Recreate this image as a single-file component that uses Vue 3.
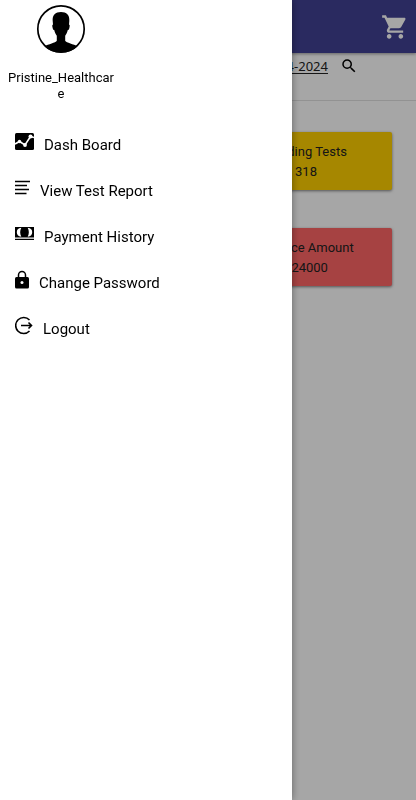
<script setup>
const menu = [
  { id: 'dash', label: 'Dash Board', icon: 'chart' },
  { id: 'report', label: 'View Test Report', icon: 'lines' },
  { id: 'payment', label: 'Payment History', icon: 'cash' },
  { id: 'password', label: 'Change Password', icon: 'lock' },
  { id: 'logout', label: 'Logout', icon: 'exit' }
]
const cards = [
  { title: 'Pending Tests', value: '318', tone: 'gold' },
  { title: 'Balance Amount', value: '724000', tone: 'red' }
]
</script>

<template>
  <div class="page">
    <header class="topbar">
      <button class="icon-btn" type="button" aria-label="Cart">
        <svg width="28" height="28" viewBox="0 0 24 24" fill="#fff">
          <path d="M7 18c-1.1 0-1.99.9-1.99 2S5.9 22 7 22s2-.9 2-2-.9-2-2-2zM1 2v2h2l3.6 7.59-1.35 2.45c-.16.28-.25.61-.25.96 0 1.1.9 2 2 2h12v-2H7.42c-.14 0-.25-.11-.25-.25l.03-.12.9-1.63h7.45c.75 0 1.41-.41 1.75-1.03l3.58-6.49c.08-.14.12-.31.12-.48 0-.55-.45-1-1-1H5.21l-.94-2H1zm16 16c-1.1 0-1.99.9-1.99 2s.89 2 1.99 2 2-.9 2-2-.9-2-2-2z" />
        </svg>
      </button>
    </header>
    <div class="filter">
      <a class="date" href="#date">01-04-2024</a>
      <button class="icon-btn" type="button" aria-label="Search">
        <svg width="18" height="18" viewBox="0 0 24 24">
          <path d="M15.5 14h-.79l-.28-.27A6.471 6.471 0 0 0 16 9.5 6.5 6.5 0 1 0 9.5 16c1.61 0 3.09-.59 4.23-1.57l.27.28v.79l5 4.99L20.49 19l-4.99-5zm-6 0C7.01 14 5 11.99 5 9.5S7.01 5 9.5 5 14 7.01 14 9.5 11.99 14 9.5 14z" />
        </svg>
      </button>
    </div>
    <main class="cards">
      <section v-for="c in cards" :key="c.title" class="card" :class="c.tone">
        <span>{{ c.title }}</span>
        <span>{{ c.value }}</span>
      </section>
    </main>
  </div>

  <div class="backdrop"></div>

  <aside class="drawer">
    <div class="profile">
      <svg class="avatar" width="50" height="50" viewBox="0 0 50 50">
        <circle cx="25" cy="25" r="23.2" fill="#fff" stroke="#000" stroke-width="1.7" />
        <path d="M25 8c-5.500 0-8.800 3-8.300 9l.3 3.500c-1 .3-.8 1.500-.4 3.200.3 1.400.8 2.300 1.600 2.400.6 2.700 1.500 4.300 2.600 5.700v5c-1 2.200-8.600 3.200-12.300 5.700A23.500 23.500 0 0 0 25 48.500a23.500 23.500 0 0 0 16.500-6c-3.700-2.500-11.300-3.500-12.300-5.700v-5c1.100-1.400 2-3 2.600-5.700.8-.1 1.300-1 1.600-2.400.4-1.700.6-2.900-.4-3.200l.3-3.500C33.800 11 30.500 8 25 8z" />
      </svg>
      <span class="name">Pristine_Healthcare</span>
    </div>
    <nav class="menu">
      <a v-for="m in menu" :key="m.id" class="item" :href="'#' + m.id">
        <svg v-if="m.icon === 'chart'" width="19" height="19" viewBox="0 0 19 19">
          <rect y="1" width="19" height="17" rx="1.500" />
          <path d="M0 12 4.500 9.500 10 13 15.500 4.500 19 5.500" fill="none" stroke="#fff" stroke-width="1.600" />
          <g fill="#fff">
            <circle cx="4.500" cy="9.500" r="1.700" />
            <circle cx="10" cy="13" r="1.900" />
            <circle cx="15.500" cy="4.500" r="2" />
          </g>
        </svg>
        <svg v-else-if="m.icon === 'lines'" width="15" height="19" viewBox="0 0 15 19" fill="none" stroke="#000" stroke-width="1.400">
          <path d="M0 3.500h15M0 7.500h12M0 11.500h14M0 15.500h11.500" />
        </svg>
        <svg v-else-if="m.icon === 'cash'" width="19" height="19" viewBox="0 0 19 19">
          <path d="M0 3h19v10.500H0zM0 14.800h19v1.200H0z" />
          <path fill="#fff" d="M6.300 3.800C3 4.300 1.800 6 1.800 8.200s1.200 4 4.500 4.500C4.800 9.800 4.800 6.800 6.300 3.800zM12.700 3.800c3.300.5 4.500 2.200 4.500 4.400s-1.200 4-4.500 4.500c1.500-2.900 1.500-5.900 0-8.900z" />
        </svg>
        <svg v-else-if="m.icon === 'lock'" width="14" height="19" viewBox="0 0 14 19">
          <path d="M3.500 8V5a3.500 3.500 0 0 1 7 0v3" fill="none" stroke="#000" stroke-width="1.500" />
          <rect y="7" width="14" height="11.500" rx="1.500" />
          <circle cx="7" cy="12.500" r="1.500" fill="#fff" />
        </svg>
        <svg v-else width="18" height="19" viewBox="0 0 18 19" fill="none" stroke="#000" stroke-width="1.600">
          <path d="M14.500 4A8 8 0 1 0 14.500 15M6 9.500h11M13.500 6.500l3 3-3 3" />
        </svg>
        <span class="label">{{ m.label }}</span>
      </a>
    </nav>
  </aside>
</template>

<style>
body {
  background: #fff;
}
</style>

<style scoped>
.page,
.drawer {
  font-family: Roboto, "Liberation Sans", sans-serif;
  color: #000;
}
.topbar {
  display: flex;
  align-items: center;
  justify-content: flex-end;
  height: 53px;
  padding: 0 7px;
  background: #414194;
  box-shadow: 0 1px 3px rgba(0, 0, 0, 0.4);
}
.icon-btn {
  display: flex;
  padding: 0;
  border: 0;
  background: none;
}
.filter {
  display: flex;
  align-items: flex-start;
  justify-content: flex-end;
  gap: 12px;
  height: 43px;
  padding: 4px 58px 0 0;
  border-bottom: 1px solid #e0e0e0;
}
.date {
  font-family: "Noto Sans", sans-serif;
  font-size: 13px;
  line-height: 18px;
  color: #222;
  text-underline-offset: 2px;
}
.cards {
  display: grid;
  grid-template-columns: 1fr 1fr;
  column-gap: 24px;
  row-gap: 38px;
  padding: 31px 24px;
}
.card {
  grid-column: 2;
  display: flex;
  flex-direction: column;
  align-items: center;
  padding: 10px 0 8px;
  border-radius: 2px;
  font-size: 13px;
  line-height: 20px;
  color: #222;
  box-shadow: 0 1px 3px rgba(0, 0, 0, 0.5);
}
.gold {
  background: #ffcf00;
}
.red {
  background: #ff6666;
}
.backdrop {
  position: fixed;
  inset: 0;
  background: rgba(0, 0, 0, 0.35);
}
.drawer {
  position: fixed;
  inset: 0 auto 0 0;
  width: 292px;
  background: #fff;
  box-shadow: 0 0 8px rgba(0, 0, 0, 0.4);
}
.profile {
  display: flex;
  flex-direction: column;
  align-items: center;
  gap: 16px;
  width: 110px;
  padding: 4px 6px 0;
}
.name {
  width: 110px;
  font-size: 13px;
  line-height: 16px;
  text-align: center;
  overflow-wrap: anywhere;
}
.menu {
  display: flex;
  flex-direction: column;
  padding-top: 20px;
}
.item {
  display: flex;
  align-items: center;
  gap: 10px;
  height: 46px;
  padding-left: 15px;
  color: #000;
  text-decoration: none;
}
.item svg {
  margin-bottom: 8px;
}
.label {
  font-size: 15px;
  line-height: 20px;
}
</style>
